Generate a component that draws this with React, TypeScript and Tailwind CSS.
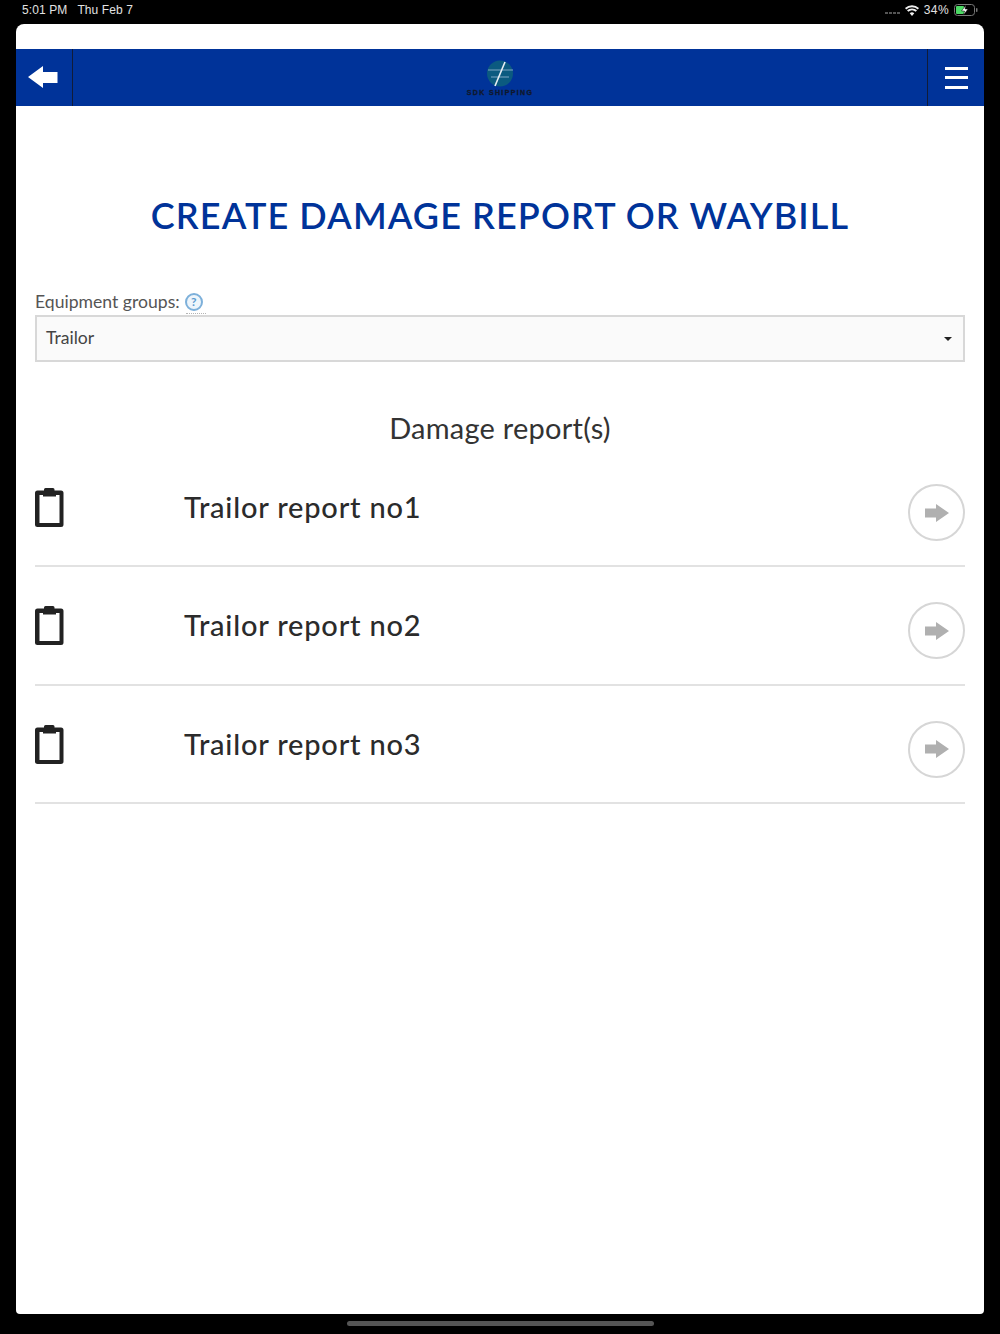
const lato = "font-['Lato','Open_Sans',sans-serif]";

function Clipboard() {
  return (
    <svg width="29" height="39" viewBox="0 0 29 39" className="block">
      <path d="M9 1.500 Q9 0 10.500 0 H18 Q19.500 0 19.500 1.500 V2.500 H26 Q28.500 2.500 28.500 5 V36.500 Q28.500 39 26 39 H2.500 Q0 39 0 36.500 V5 Q0 2.500 2.500 2.500 H9 Z" fill="#222" />
      <path d="M4.500 7 H8 V8.500 H21 V7 H24.500 V35 H4.500 Z" fill="#fff" />
    </svg>
  );
}

function Row({ label }: { label: string }) {
  return (
    <div className="flex h-[118.300px] border-b-2 border-[#e2e2e2]">
      <div className="w-[149px] pt-[39px]">
        <Clipboard />
      </div>
      <div className="flex-1 pt-[39px] text-[29px] font-medium leading-[38px] tracking-[0.8px] text-[#2b2b2b]">{label}</div>
      <div className="pt-[35px]">
        <div className="flex h-[57px] w-[57px] items-center justify-center rounded-full border-2 border-[#d6d6d6] bg-white">
          <svg width="24" height="18" viewBox="0 0 24 18">
            <path d="M0 4.500 H11 V0 L24 9 L11 18 V13.500 H0 Z" fill="#b0b0b0" />
          </svg>
        </div>
      </div>
    </div>
  );
}

export default function App() {
  return (
    <div className={`flex h-[1334px] w-[1000px] flex-col overflow-hidden bg-black ${lato}`}>
      <div className="flex h-[24px] items-start justify-between pl-[22px] pr-[22px] pt-[3px] font-['Liberation_Sans',sans-serif] text-[12px] leading-[14px] tracking-[0.1px] text-[#e2e2e2]">
        <div className="flex gap-[10px]">
          <span>5:01 PM</span>
          <span>Thu Feb 7</span>
        </div>
        <div className="flex items-center">
          <div className="mr-[5px] flex gap-[1px] pt-[5px]">
            <i className="h-[2px] w-[3px] bg-[#555]" />
            <i className="h-[2px] w-[3px] bg-[#555]" />
            <i className="h-[2px] w-[3px] bg-[#555]" />
            <i className="h-[2px] w-[3px] bg-[#555]" />
          </div>
          <svg width="14" height="11" viewBox="0 0 14 11" className="mr-[5px]">
            <path d="M7 11 L4.700 8.300 A3.500 3.500 0 0 1 9.300 8.300 Z M3.300 6.800 L2 5.300 A7.500 7.500 0 0 1 12 5.300 L10.700 6.800 A5.600 5.600 0 0 0 3.300 6.800 Z M1.200 4.400 L0 3 A10.500 10.500 0 0 1 14 3 L12.800 4.400 A8.800 8.800 0 0 0 1.200 4.400 Z" fill="#f0f0f0" />
          </svg>
          <span className="mr-[5px] tracking-[0.4px]">34%</span>
          <svg width="24" height="12" viewBox="0 0 24 12">
            <rect x="0.500" y="0.500" width="20" height="11" rx="3" fill="none" stroke="#777" />
            <rect x="2" y="2" width="8" height="8" rx="1" fill="#4cd964" />
            <rect x="22" y="4" width="1.500" height="4" rx="0.700" fill="#777" />
            <path d="M12 1 L7.500 7 H10.500 L9.500 11 L14 5 H11 Z" fill="#fff" stroke="#000" strokeWidth="0.500" />
          </svg>
        </div>
      </div>

      <div className="mx-[16px] flex h-[1290px] flex-col overflow-hidden rounded-t-[8px] rounded-b-[4px] bg-white">
        <div className="h-[25px] shrink-0" />
        <div className="flex h-[57px] shrink-0 items-stretch bg-[#003399]">
          <div className="flex w-[57px] items-center justify-center border-r border-[#111c38]">
            <svg width="30" height="22" viewBox="0 0 30 22" className="ml-[-2px] mt-[-1px]">
              <path d="M0 11 L15 0 V6 H29.500 V17 H15 V22 Z" fill="#fff" />
            </svg>
          </div>
          <div className="flex flex-1 items-center justify-center">
            <svg width="72" height="40" viewBox="0 0 72 40" className="mt-[-1px]">
              <circle cx="36" cy="16.500" r="13" fill="#0b5a80" />
              <path d="M24 13 H49 M27 20 H45" stroke="#7fa6c4" strokeWidth="1" />
              <path d="M31 29 L41 5" stroke="#e8eef4" strokeWidth="1.600" />
              <text x="36" y="37.500" textAnchor="middle" className="font-['Liberation_Sans',sans-serif]" fontSize="7" fontWeight="700" fill="#10182c" stroke="#10182c" strokeWidth="0.300" letterSpacing="1.350">SDK SHIPPING</text>
            </svg>
          </div>
          <div className="flex w-[57px] flex-col items-center justify-center gap-[6.500px] border-l border-[#111c38]">
            <i className="h-[3px] w-[23px] bg-white" />
            <i className="h-[3px] w-[23px] bg-white" />
            <i className="h-[3px] w-[23px] bg-white" />
          </div>
        </div>

        <div className="flex flex-1 flex-col px-[19px]">
          <h1 className="mt-[87px] text-center text-[36px] font-semibold leading-[44px] tracking-[1.100px] text-[#003399]">
            CREATE DAMAGE REPORT OR WAYBILL
          </h1>
          <div className="mt-[52px] flex h-[26px] items-center text-[17.600px] leading-[26px] text-[#555]">
            <span>Equipment groups:</span>
            <span className="relative ml-[5px] flex h-[18px] w-[18px] items-center justify-center rounded-full border-2 border-[#7db0da] bg-[#eef5fb] text-[12px] font-bold leading-none text-[#5b9bd0]">
              ?
              <i className="absolute left-[-1px] top-[18px] w-[20px] border-b border-dotted border-[#b5b5b5]" />
            </span>
          </div>
          <div className="flex h-[47px] items-center justify-between border-2 border-[#d8d8d8] bg-[#fafafa] pl-[9px] pr-[11px] text-[17.600px] text-[#444]">
            <span>Trailor</span>
            <i className="h-0 w-0 border-x-[4px] border-t-[4px] border-x-transparent border-t-[#222]" />
          </div>
          <h2 className="mt-[48px] text-center text-[29px] font-normal leading-[36px] tracking-[0.250px] text-[#333]">Damage report(s)</h2>
          <div className="mt-[3px]">
            <Row label="Trailor report no1" />
            <Row label="Trailor report no2" />
            <Row label="Trailor report no3" />
          </div>
        </div>
      </div>

      <div className="flex flex-1 justify-center pt-[7px]">
        <div className="h-[5px] w-[307px] rounded-full bg-[#555]" />
      </div>
    </div>
  );
}
